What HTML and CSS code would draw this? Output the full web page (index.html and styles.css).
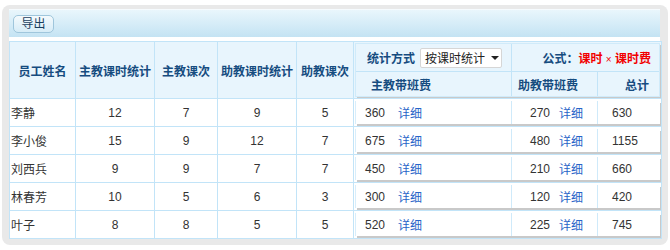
FILE: index.html
```html
<!DOCTYPE html>
<html>
<head>
<meta charset="utf-8">
<link rel="stylesheet" href="styles.css">
</head>
<body>
<div class="frame">
  <div class="panel">
    <div class="toolbar"><span class="btn">导出</span></div>
    <table class="grid">
      <colgroup>
        <col class="c1"><col class="c2"><col class="c3"><col class="c4"><col class="c5"><col class="c6">
      </colgroup>
      <thead>
        <tr class="hrow">
          <th>员工姓名</th><th>主教课时统计</th><th>主教课次</th><th>助教课时统计</th><th>助教课次</th>
          <th class="rs">
            <div class="nest nhead">
              <div class="ntop">
                <div class="way">统计方式<span class="sel">按课时统计<i class="tri"></i></span></div>
                <div class="formula">公式：<span class="red">课时 <small>×</small> 课时费</span></div>
              </div>
              <div class="nbot">
                <div class="n1 hc1">主教带班费</div>
                <div class="n2 hc2">助教带班费</div>
                <div class="n3 hc3">总计</div>
              </div>
            </div>
          </th>
        </tr>
      </thead>
      <tbody>
        <tr><td class="name">李静</td><td>12</td><td>7</td><td>9</td><td>5</td>
          <td class="rs"><div class="nest nrow"><div class="n1"><span class="v1">360</span><a class="lk">详细</a></div><div class="n2"><span class="v2">270</span><a class="lk">详细</a></div><div class="n3">630</div></div></td></tr>
        <tr><td class="name">李小俊</td><td>15</td><td>9</td><td>12</td><td>7</td>
          <td class="rs"><div class="nest nrow"><div class="n1"><span class="v1">675</span><a class="lk">详细</a></div><div class="n2"><span class="v2">480</span><a class="lk">详细</a></div><div class="n3">1155</div></div></td></tr>
        <tr><td class="name">刘西兵</td><td>9</td><td>9</td><td>7</td><td>7</td>
          <td class="rs"><div class="nest nrow"><div class="n1"><span class="v1">450</span><a class="lk">详细</a></div><div class="n2"><span class="v2">210</span><a class="lk">详细</a></div><div class="n3">660</div></div></td></tr>
        <tr><td class="name">林春芳</td><td>10</td><td>5</td><td>6</td><td>3</td>
          <td class="rs"><div class="nest nrow"><div class="n1"><span class="v1">300</span><a class="lk">详细</a></div><div class="n2"><span class="v2">120</span><a class="lk">详细</a></div><div class="n3">420</div></div></td></tr>
        <tr><td class="name">叶子</td><td>8</td><td>8</td><td>5</td><td>5</td>
          <td class="rs"><div class="nest nrow"><div class="n1"><span class="v1">520</span><a class="lk">详细</a></div><div class="n2"><span class="v2">225</span><a class="lk">详细</a></div><div class="n3">745</div></div></td></tr>
      </tbody>
    </table>
  </div>
</div>
</body>
</html>
```

FILE: styles.css
```css
* { box-sizing: border-box; }
html, body { margin: 0; padding: 0; background: #fff; }
body {
  font-family: "Liberation Sans", "Noto Sans CJK SC", sans-serif;
  font-size: 12px;
  color: #333;
}
.frame {
  margin: 5px 2px 5px 2px;
  width: 666px;
  height: 240px;
  background: #e9e9e9;
  border-radius: 8px;
  padding: 4px 8px 6px 7px;
}
.panel {
  background: #fff;
  height: 230px;
  border-top: 1px solid #f6fbfe;
}
.toolbar {
  height: 27px;
  background: linear-gradient(#e9f6fc, #cfe9f6 70%, #c4e3f3);
  padding: 5px 0 0 4px;
}
.btn {
  display: inline-block;
  width: 41px;
  height: 18px;
  line-height: 16px;
  text-align: center;
  border: 1px solid #9fc6dc;
  border-radius: 5px;
  background: linear-gradient(#f4fafd, #d6ecf7);
  color: #1c3f5e;
  font-size: 12px;
}
.grid {
  margin-top: 4px;
  border-collapse: collapse;
  table-layout: fixed;
  width: 652px;
}
.c1 { width: 66px; }
.c2 { width: 79px; }
.c3 { width: 63px; }
.c4 { width: 79px; }
.c5 { width: 57px; }
.c6 { width: 308px; }
.grid th, .grid td {
  border: 1px solid #c2e4f8;
  padding: 0;
  text-align: center;
  vertical-align: middle;
}
.grid th {
  background: #e8f5fd;
  color: #164c80;
  font-weight: bold;
  height: 57px;
}
.grid td { height: 28px; background: #fff; }
.grid td.name { text-align: left; padding-left: 1px; }
.grid .rs {
  padding: 1px 2px 1px 1px;
  text-align: left;
}
.grid td.rs { padding: 2px 0 0 1px; vertical-align: top; }
.nest {
  width: 305px;
  box-shadow: 2px 2px 0 #c9c9c9;
}
.nhead {
  background: #e8f5fd;
  border: 1px solid #d0ebfa;
  height: 54px;
  display: flex;
  flex-direction: column;
}
.ntop {
  height: 28px;
  display: flex;
  align-items: center;
  border-bottom: 1px solid #c2e4f8;
}
.way {
  width: 156px;
  height: 100%;
  display: flex;
  align-items: center;
  padding-left: 11px;
  border-right: 1px solid #c2e4f8;
  white-space: nowrap;
}
.sel {
  display: inline-flex;
  align-items: center;
  margin-left: 5px;
  width: 82px;
  height: 20px;
  background: #fff;
  border: 1px solid #d6d6d6;
  border-radius: 2px;
  color: #222;
  font-weight: normal;
  padding-left: 4px;
}
.tri {
  margin-left: 6px;
  width: 0; height: 0;
  border-left: 4px solid transparent;
  border-right: 4px solid transparent;
  border-top: 4px solid #222;
}
.formula {
  flex: 1;
  text-align: right;
  padding-right: 8px;
  white-space: nowrap;
}
.red { color: #f20000; }
.red small { font-size: 10px; font-weight: normal; }
.nbot {
  flex: 1;
  display: flex;
  align-items: center;
}
.n1, .n2, .n3 { height: 100%; display: flex; align-items: center; }
.n1 { width: 156px; border-right: 1px solid #c2e4f8; }
.n2 { width: 86px; border-right: 1px solid #c2e4f8; }
.n3 { flex: 1; }
.hc1 { padding-left: 15px; }
.hc2 { padding-left: 6px; }
.hc3 { justify-content: flex-end; padding-right: 10px; }
.nrow {
  height: 23px;
  display: flex;
  background: #fff;
  border-left: 1px solid #d8eefb;
}
.nrow .n1 { padding-left: 9px; border-right-color: #cfeafa; }
.nrow .n2 { border-right-color: #cfeafa; }
.v1 { width: 33px; }
.v2 { width: 38px; text-align: right; margin-right: 9px; }
.nrow .n3 { padding-left: 14px; }
.lk { color: #2764c8; text-decoration: none; }
```
